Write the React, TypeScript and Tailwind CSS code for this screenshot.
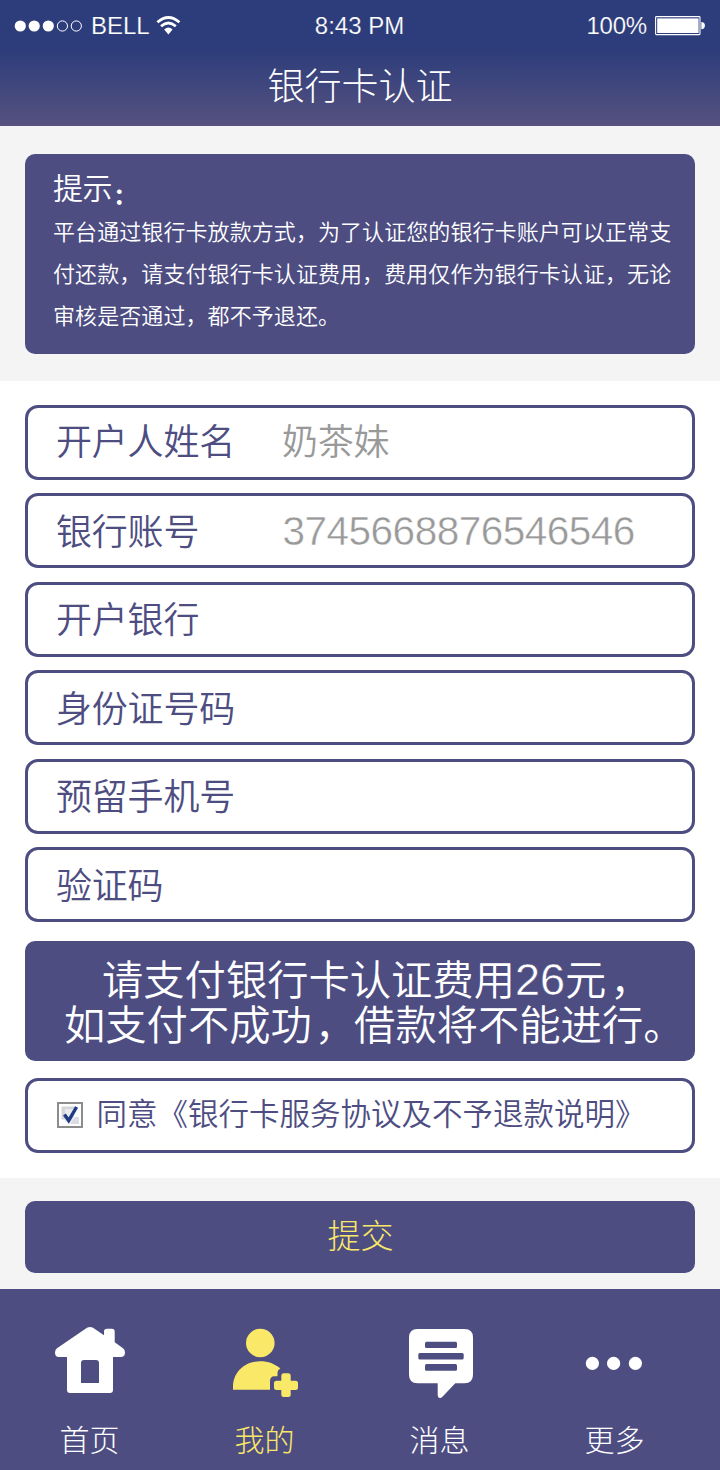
import type { ReactNode } from "react";

const fields = [
  { label: "开户人姓名", value: "奶茶妹", shift: "-mt-[7px]" },
  { label: "银行账号", value: "3745668876546546", shift: "-mt-[3px]" },
  { label: "开户银行", value: "", shift: "-mt-[4px]" },
  { label: "身份证号码", value: "", shift: "-mt-[3px]" },
  { label: "预留手机号", value: "", shift: "-mt-[4px]" },
  { label: "验证码", value: "", shift: "-mt-[3px]" },
];

function StatusBar() {
  return (
    <div className="flex h-[52px] items-center font-['Liberation_Sans',sans-serif] text-[24px] leading-[24px] text-white">
      <div className="flex flex-1 items-center pl-[14px]">
        <svg className="h-[14px] w-[70px]" viewBox="0 0 70 14">
          <circle cx="6.3" cy="7" r="5.6" fill="currentColor" />
          <circle cx="20.2" cy="7" r="5.6" fill="currentColor" />
          <circle cx="34.3" cy="7" r="5.6" fill="currentColor" />
          <circle cx="48.4" cy="7" r="5.1" fill="none" stroke="currentColor" />
          <circle cx="62.3" cy="7" r="5.1" fill="none" stroke="currentColor" />
        </svg>
        <span className="ml-[7px] [-webkit-text-stroke:0.2px_#2d3d7b]">BELL</span>
        <svg className="ml-[6px] h-[20px] w-[26px]" viewBox="0 0 26 20" fill="none" stroke="currentColor">
          <path d="M1.4 6.3 Q12.4 -3.2 23.4 6.3" strokeWidth="2.8" />
          <path d="M5 10.3 Q12.4 3.8 19.8 10.3" strokeWidth="2.8" />
          <path d="M8.2 13.4 Q12.4 9.8 16.6 13.4 L12.4 18.4 Z" fill="currentColor" stroke="none" />
        </svg>
      </div>
      <span className="[-webkit-text-stroke:0.2px_#2d3d7b]">8:43 PM</span>
      <div className="flex flex-1 items-center justify-end pr-[15px]">
        <span className="tracking-[-0.2px] [-webkit-text-stroke:0.2px_#2d3d7b]">100%</span>
        <svg className="ml-[8px] h-[20px] w-[50px]" viewBox="0 0 50 20">
          <rect x="0.6" y="0.6" width="44.4" height="18" rx="0.8" fill="none" stroke="currentColor" strokeWidth="1.1" />
          <rect x="2.2" y="2.4" width="41.4" height="14.6" fill="currentColor" />
          <path d="M46.3 6 A3.6 3.6 0 0 1 46.3 13.2 Z" fill="currentColor" />
        </svg>
      </div>
    </div>
  );
}

function Checkbox() {
  return (
    <svg className="h-[26px] w-[26px]" viewBox="0 0 26 26">
      <rect x="1" y="1" width="24" height="24" fill="#fff" stroke="#8c8c8a" strokeWidth="2" />
      <path d="M4.5 4.5h14v3H8v10H4.5z" fill="#d3d5da" />
      <path d="M8 8h9v12H8z" fill="#e8eaee" />
      <path d="M18 15h4v7h-9z" fill="#dcdde2" />
      <path d="M7.4 12.6 L11.7 18.6 L19.6 5" fill="none" stroke="#203a86" strokeWidth="3.4" />
    </svg>
  );
}

function NavItem({ label, active, children }: { label: string; active?: boolean; children: ReactNode }) {
  return (
    <a className={active ? "flex w-[175px] flex-col items-center text-[#fae868]" : "flex w-[175px] flex-col items-center text-white"}>
      <svg className="h-[80px] w-[100px]" viewBox="0 0 100 80" fill="currentColor">
        {children}
      </svg>
      <span className="mt-[18px] pl-[1px] text-[30px] leading-[40px] font-light">{label}</span>
    </a>
  );
}

export default function App() {
  return (
    <div className="flex h-[1470px] w-[720px] flex-col bg-white font-['Noto_Sans_CJK_SC',sans-serif] whitespace-nowrap">
      <header className="h-[126px] bg-linear-to-b from-[#2d3d7b] from-40% to-[#56517f] text-white">
        <StatusBar />
        <h1 className="mt-[8px] text-center text-[37px] leading-[48px] font-light">银行卡认证</h1>
      </header>

      <section className="h-[255px] bg-[#f4f4f4] px-[25px] pt-[28px]">
        <div className="h-[200px] rounded-[10px] bg-[#4d4d82] px-[28px] pt-[11px] font-[350] text-white">
          <h2 className="flex h-[44px] text-[30px] leading-[42px] tracking-[-0.6px]">
            提示<span className="pt-[8px] pl-[2px] text-[22px] font-black">：</span>
          </h2>
          <p className="text-[22px] leading-[42px] tracking-[0.08px]">
            平台通过银行卡放款方式，为了认证您的银行卡账户可以正常支
            <br />
            付还款，请支付银行卡认证费用，费用仅作为银行卡认证，无论
            <br />
            审核是否通过，都不予退还。
          </p>
        </div>
      </section>

      <main className="h-[797px] px-[25px] pt-[24px]">
        <div className="flex flex-col gap-[13.4px]">
          {fields.map((f) => (
            <div key={f.label} className="flex h-[75px] items-center rounded-[13px] border-3 border-[#4d4d82] pl-[28px]">
              <span className={`${f.shift} w-[226px] text-[36px] leading-[48px] font-[350] tracking-[-0.2px] text-[#4d4d82]`}>
                {f.label}
              </span>
              {/^\d/.test(f.value) ? (
                <span className="pl-[0.5px] font-['Liberation_Sans',sans-serif] text-[40.5px] leading-[48px] tracking-[-0.5px] text-[#999] [-webkit-text-stroke:0.45px_#fff]">
                  {f.value}
                </span>
              ) : (
                <span className={`${f.shift} text-[36px] leading-[48px] font-[350] tracking-[-0.2px] text-[#999]`}>{f.value}</span>
              )}
            </div>
          ))}
        </div>

        <div className="mt-[19px] h-[120px] rounded-[10px] bg-[#4d4d82] pt-[14px] text-[41.3px] leading-[45px] font-[350] text-white">
          <p className="flex h-[45px] pl-[77px]">
            请支付银行卡认证费用
            <span className="pt-[2px] font-['Liberation_Sans',sans-serif] text-[45px] [-webkit-text-stroke:0.5px_#4d4d82]">26</span>
            元<span className="pl-[4px]">，</span>
          </p>
          <p className="pl-[39px]">
            如支付不成功<span className="pl-[3px]">，</span>
            <span className="-ml-[2px]">借款将不能进行。</span>
          </p>
        </div>

        <label className="mt-[17px] flex h-[75px] items-center rounded-[13px] border-3 border-[#4d4d82] pl-[29px]">
          <Checkbox />
          <span className="-mt-[7px] ml-[13.5px] text-[30.5px] leading-[40px] font-[350] text-[#4d4d82]">
            同意《银行卡服务协议及不予退款说明》
          </span>
        </label>
      </main>

      <section className="h-[111px] bg-[#f4f4f4] px-[25px] pt-[23px]">
        <button className="block h-[72px] w-full rounded-[10px] bg-[#4d4d82] pb-[7px] pl-[1px] text-[33px] leading-[44px] font-light text-[#fae868]">
          提交
        </button>
      </section>

      <nav className="flex h-[181px] bg-[#4d4d82] pt-[31px] pl-[1.5px]">
        <NavItem label="首页">
          <path
            fillRule="evenodd"
            d="M48 7.8 Q51 6 54 7.8 L65 15.2 V11.5 Q65 8.7 68 8.7 H72.8 Q75.7 8.7 75.7 11.5 V22.3 L84 28.2 Q86 29.8 86 32.5 Q86 37 81.5 37 H74 V70 Q74 73 71 73 H31 Q28 73 28 70 V37 H20 Q16 37 16 32.5 Q16 29.8 18 28.2 Z M42 63 V43 Q42 40 45 40 H57 Q60 40 60 43 V63 Z"
          />
        </NavItem>
        <NavItem label="我的" active>
          <circle cx="46.3" cy="23" r="14.3" />
          <path d="M19 69.7 V67 C19 52 31 41.3 46.3 41.3 C54 41.3 61 43.8 66.3 48.6 Q63.5 50.2 63.5 52.5 V56.3 H60.5 Q56 56.5 56 61 V69.7 Z" />
          <path d="M69.8 53.3 h4.4 q2.5 0 2.5 2.5 v4.9 h4.8 q2.5 0 2.5 2.5 v4.2 q0 2.5 -2.5 2.5 h-4.8 v4.6 q0 2.5 -2.5 2.5 h-4.4 q-2.5 0 -2.5 -2.5 v-4.6 h-4.8 q-2.5 0 -2.5 -2.5 v-4.2 q0 -2.5 2.5 -2.5 h4.8 v-4.9 q0 -2.5 2.5 -2.5z" />
        </NavItem>
        <NavItem label="消息">
          <path d="M28.5 9 H75.5 Q84 9 84 17.5 V54.8 Q84 63.3 75.5 63.3 H66.3 L53.2 77 Q51.7 78.5 50 77.7 Q48.7 77 48.7 75 V63.3 H28.5 Q20 63.3 20 54.8 V17.5 Q20 9 28.5 9 Z" />
          <g fill="#4d4d82">
            <rect x="36" y="21.7" width="32" height="6.4" rx="1.5" />
            <rect x="29.3" y="33" width="45.4" height="6.6" rx="1.5" />
            <rect x="36" y="44.1" width="32" height="6.6" rx="1.5" />
          </g>
        </NavItem>
        <NavItem label="更多">
          <circle cx="28.4" cy="43.4" r="6.6" />
          <circle cx="49.6" cy="43.4" r="6.6" />
          <circle cx="71.4" cy="43.4" r="6.6" />
        </NavItem>
      </nav>
    </div>
  );
}
